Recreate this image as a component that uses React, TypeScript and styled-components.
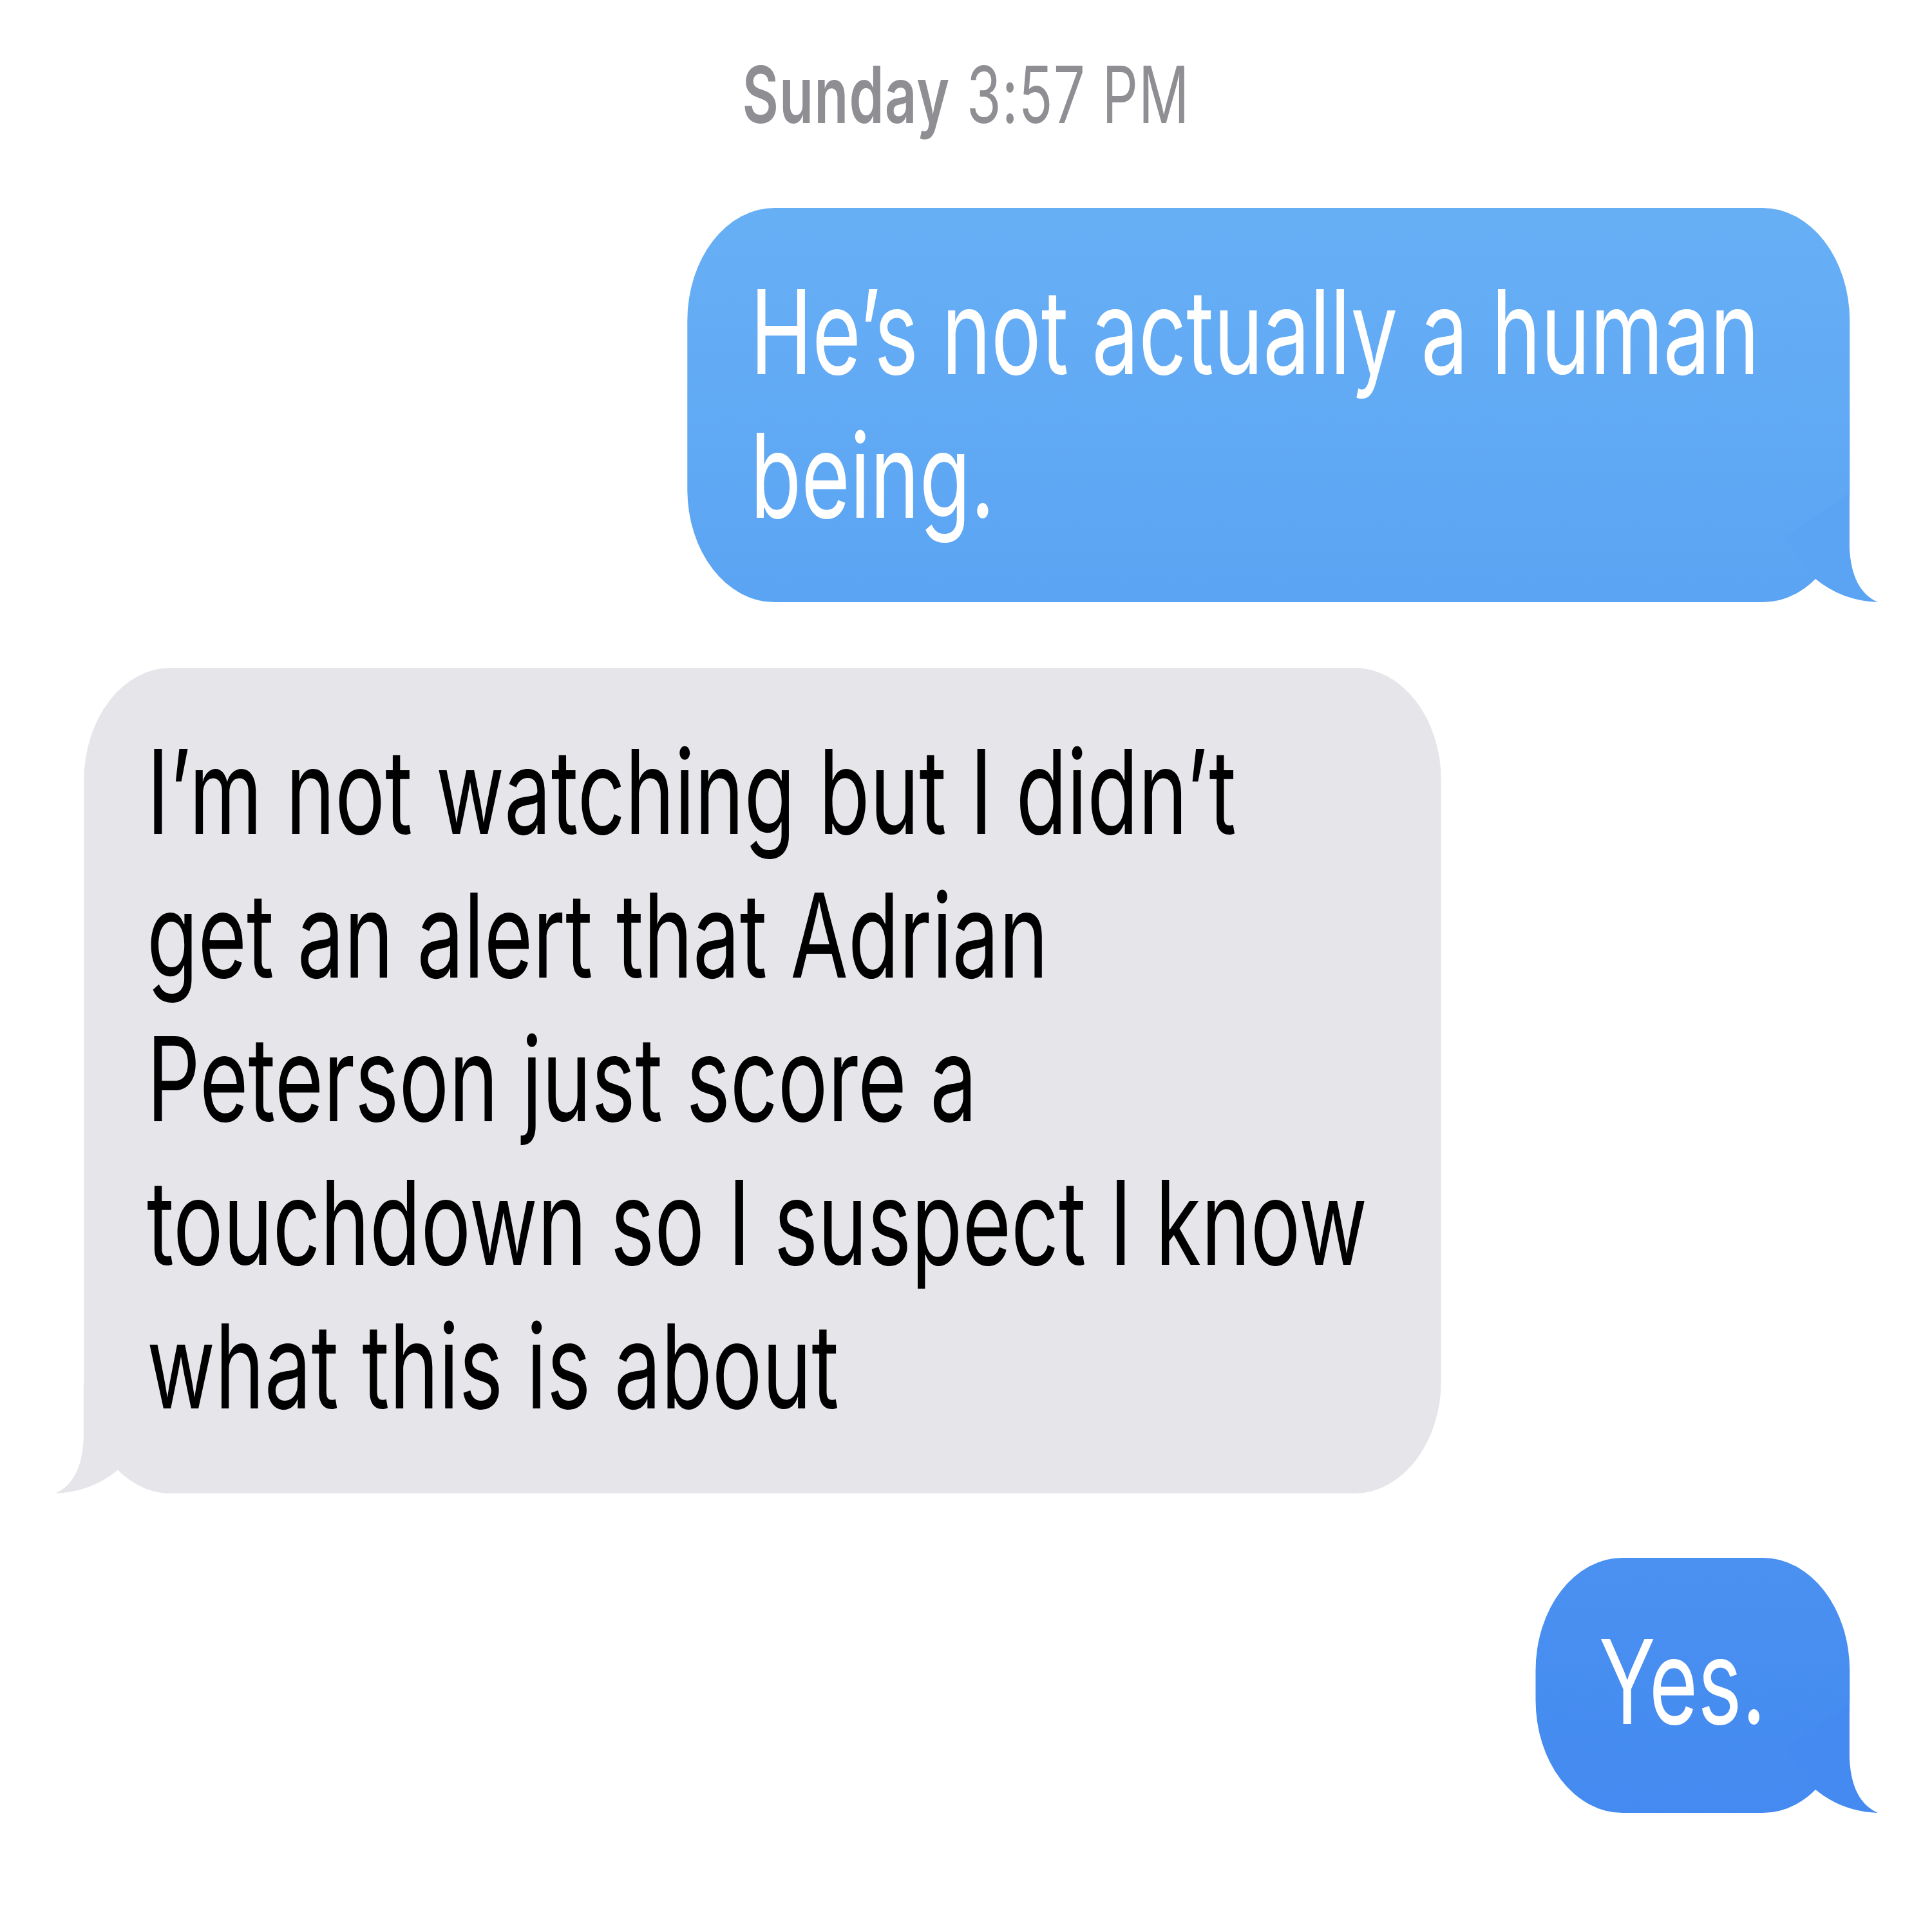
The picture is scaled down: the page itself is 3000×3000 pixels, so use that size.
import React from 'react'
import styled, { createGlobalStyle } from 'styled-components'

// the screenshot is squeezed sideways, so the whole screen is laid out wide and scaled on x
const SX = 0.712
const hx = (v: number) => `${(v / SX).toFixed(1)}px`

const GlobalStyle = createGlobalStyle`
  html, body {
    margin: 0;
    padding: 0;
    background: #ffffff;
    overflow: hidden;
  }
`

const Screen = styled.div`
  width: ${hx(3000)};
  height: 3000px;
  transform: scaleX(${SX});
  transform-origin: 0 0;
  padding-top: 74px;
  box-sizing: border-box;
  display: flex;
  flex-direction: column;
  font-family: Inter, 'Liberation Sans', sans-serif;
`

const Stamp = styled.div`
  text-align: center;
  font-size: 122px;
  line-height: 146px;
  letter-spacing: 1.5px;
  color: #8e8e93;
  margin-bottom: 103px;
`

const Day = styled.span`
  font-weight: 600;
`

const Row = styled.div<{ $sent?: boolean; $gap: number }>`
  display: flex;
  justify-content: ${({ $sent }) => ($sent ? 'flex-end' : 'flex-start')};
  padding: 0 ${hx(128)} 0 ${hx(130)};
  margin-bottom: ${({ $gap }) => $gap}px;
`

const Bubble = styled.div<{
  $sent?: boolean
  $top: string
  $bottom: string
  $pb: number
  $pr: number
}>`
  position: relative;
  padding: 81px ${({ $pr }) => hx($pr)} ${({ $pb }) => $pb}px ${hx(98)};
  border-radius: ${hx(135)} / 175px;
  background: ${({ $top, $bottom }) => `linear-gradient(180deg, ${$top}, ${$bottom})`};
  color: ${({ $sent }) => ($sent ? '#ffffff' : '#000000')};
`

const Text = styled.div`
  font-size: 182px;
  line-height: 223px;
  white-space: nowrap;
  position: relative;
  z-index: 1;
`

const TailSvg = styled.svg<{ $sent?: boolean }>`
  position: absolute;
  bottom: 0;
  ${({ $sent }) => ($sent ? `right: -${hx(45)};` : `left: -${hx(45)}; transform: scaleX(-1);`)}
  width: ${hx(165)};
  height: 180px;
  display: block;
`

const Tail = ({ sent, color }: { sent?: boolean; color: string }) => (
  <TailSvg $sent={sent} viewBox="0 0 165 180" preserveAspectRatio="none">
    <path
      d="M120 10 L120 95 Q123 162 164 180 Q108 178 66 143 L20 80 Z"
      fill={color}
    />
  </TailSvg>
)

const App = () => (
  <>
    <GlobalStyle />
    <Screen>
      <Stamp>
        <Day>Sunday</Day> 3:57 PM
      </Stamp>

      <Row $sent $gap={102}>
        <Bubble $sent $top="#67aff5" $bottom="#5ba4f3" $pb={85} $pr={140}>
          <Text>
            He’s not actually a human
            <br />
            being.
          </Text>
          <Tail sent color="#5ba4f3" />
        </Bubble>
      </Row>

      <Row $gap={100}>
        <Bubble $top="#e5e5ea" $bottom="#e5e5ea" $pb={86} $pr={115}>
          <Text>
            I’m not watching but I didn’t
            <br />
            get an alert that Adrian
            <br />
            Peterson just score a
            <br />
            touchdown so I suspect I know
            <br />
            what this is about
          </Text>
          <Tail color="#e5e5ea" />
        </Bubble>
      </Row>

      <Row $sent $gap={0}>
        <Bubble $sent $top="#4a91f1" $bottom="#448af0" $pb={92} $pr={130}>
          <Text>Yes.</Text>
          <Tail sent color="#448af0" />
        </Bubble>
      </Row>
    </Screen>
  </>
)

export default App
